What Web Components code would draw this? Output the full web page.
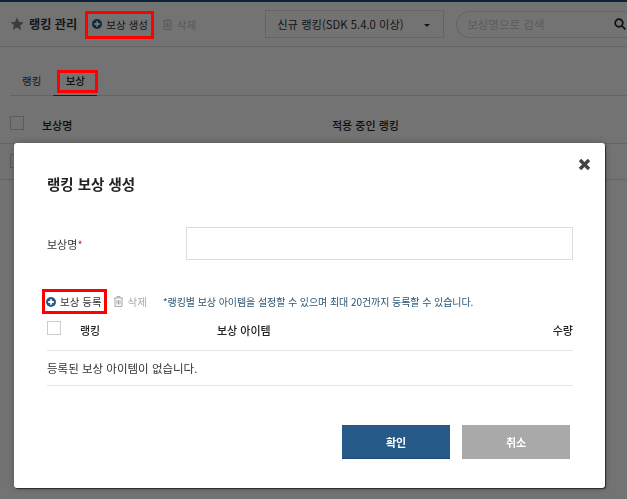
<!DOCTYPE html>
<html lang="ko">
<head>
<meta charset="utf-8">
<style>
html, body { margin: 0; height: 100%; }
body { font-family: "Noto Sans CJK KR", "Noto Sans", sans-serif; background: #fff; overflow: hidden; }
</style>
</head>
<body>
<rank-page></rank-page>
<reward-modal></reward-modal>

<script>
const PLUS = `<svg width="10" height="10" viewBox="0 0 10 10"><circle cx="5" cy="5" r="5" fill="#265a88"/><path d="M5 2.2v5.6M2.2 5h5.6" stroke="#fff" stroke-width="1.8"/></svg>`;
const TRASH = `<svg width="9" height="11" viewBox="0 0 9 11" fill="none" stroke="currentColor"><path d="M0 2h9M3 2V.5h3V2M1 2v8.5h7V2M3 4v4.5M4.5 4v4.5M6 4v4.5"/></svg>`;

class ActionLink extends HTMLElement {
  constructor() {
    super();
    const icon = this.getAttribute("icon") === "trash" ? TRASH : PLUS;
    this.attachShadow({ mode: "open" }).innerHTML = `
    <style>
    :host { display: inline-flex; align-items: center; gap: 4px; height: 22px; box-sizing: border-box;
      font-size: 10.5px; color: #333; white-space: nowrap; flex: none; }
    :host([icon=trash]) { color: var(--muted, #aaa); gap: 5px; }
    :host([marked]) { border: 3px solid #f00; height: 25px; padding: 0 2px 0 1px; }
    svg { display: block; flex: none; }
    </style>
    ${icon}<slot></slot>`;
  }
}
customElements.define("action-link", ActionLink);

class CheckBox extends HTMLElement {
  constructor() {
    super();
    this.attachShadow({ mode: "open" }).innerHTML = `
    <style>
    :host { display: block; width: 14px; height: 14px; border: 1px solid #ccc; box-sizing: border-box; background: #fff; flex: none; }
    </style>`;
  }
}
customElements.define("check-box", CheckBox);

class MarkBox extends HTMLElement {
  constructor() {
    super();
    this.attachShadow({ mode: "open" }).innerHTML = `
    <style>
    :host { position: absolute; display: block; border: 3px solid #f00; box-sizing: border-box; }
    </style>`;
  }
}
customElements.define("mark-box", MarkBox);

class RankPage extends HTMLElement {
  constructor() {
    super();
    this.attachShadow({ mode: "open" }).innerHTML = `
    <style>
    :host { display: block; border-top: 2px solid #1c4d7a; color: #333; --muted: #c8c8c8; }
    header { display: flex; align-items: center; height: 44px; border-bottom: 1px solid #ddd; padding-left: 10px; }
    h1 { font-size: 12.2px; font-weight: 700; margin: 0 15px 0 5px; white-space: nowrap; }
    .star { width: 14px; height: 14px; display: block; flex: none; }
    .del { margin-left: 15px; }
    .select { display: flex; align-items: center; justify-content: space-between; flex: none; width: 179px; height: 28px; box-sizing: border-box;
      margin-left: 69px; padding: 0 13px 0 11px; border: 1px solid #ddd; font-size: 11.3px; white-space: nowrap; }
    .caret { width: 0; height: 0; border: 3px solid transparent; border-top: 3px solid #333; border-bottom: 0; margin-top: 2px; }
    .search { display: flex; align-items: center; justify-content: space-between; flex: none; width: 172px; height: 27px; box-sizing: border-box; margin-left: 12px;
      padding: 0 0 0 10px; border: 1px solid #ddd; border-radius: 14px 0 0 14px; border-right: 0; font-size: 11.5px; color: #ccc; white-space: nowrap; }
    .search svg { margin-right: 2px; flex: none; }
    nav { display: flex; margin: 22px 0 0 10px; height: 26px; border-bottom: 1px solid #ddd; }
    nav span { font-size: 10.5px; line-height: 24px; padding: 0 12px; }
    nav span.tab { width: 44px; height: 27px; box-sizing: border-box; padding: 0; margin-bottom: -1px; border-bottom: 1px solid #1c4d7a; text-align: center; font-weight: 500; color: #222; }
    .row { display: flex; align-items: flex-start; padding-left: 10px; border-bottom: 1px solid #ddd; box-sizing: border-box; }
    .r1 { height: 48px; padding-top: 20px; }
    .r2 { height: 36px; padding-top: 10px; }
    .row strong { font-size: 11px; font-weight: 500; line-height: 16px; margin: 1px 0 0 18px; width: 272px; color: #222; }
    </style>
    <header>
      <svg class="star" viewBox="0 0 24 24"><path fill="#888" d="M12 1l3.4 7.3 7.9 1-5.8 5.5 1.5 7.9L12 18l-7 3.7 1.5-7.9L.7 9.3l7.9-1z"/></svg>
      <h1>랭킹 관리</h1>
      <action-link>보상 생성</action-link>
      <action-link class="del" icon="trash">삭제</action-link>
      <div class="select"><span>신규 랭킹(SDK 5.4.0 이상)</span><i class="caret"></i></div>
      <div class="search"><span>보상명으로 검색</span>
        <svg width="12" height="12" viewBox="0 0 12 12" fill="none" stroke="#222" stroke-width="1.7"><circle cx="5" cy="5" r="3.8"/><path d="M8 8l3.4 3.4"/></svg>
      </div>
    </header>
    <nav><span>랭킹</span><span class="tab">보상</span></nav>
    <div class="row r1"><check-box></check-box><strong>보상명</strong><strong>적용 중인 랭킹</strong></div>
    <div class="row r2"><check-box></check-box></div>`;
  }
}
customElements.define("rank-page", RankPage);

class RewardModal extends HTMLElement {
  constructor() {
    super();
    this.attachShadow({ mode: "open" }).innerHTML = `
    <style>
    :host { position: fixed; inset: 0; background: rgba(0,0,0,.55); display: block; }
    .box { position: absolute; left: 14px; top: 143px; width: 591px; height: 345px; box-sizing: border-box; background: #fff; border-radius: 3px;
      box-shadow: 1px 1px 1px rgba(0,0,0,.6), 0 0 8px rgba(0,0,0,.25); padding: 31px 32px 0 33px; color: #333; }
    .close { position: absolute; right: 14px; top: 15px; display: block; }
    h2 { margin: 0; font-size: 14.5px; font-weight: 700; line-height: 20px; color: #222; }
    .field { display: flex; align-items: center; margin-top: 33px; font-size: 11px; }
    .field label { width: 139px; }
    .field label i { color: #d2232a; font-style: normal; }
    .field div { flex: 1; height: 33px; box-sizing: border-box; border: 1px solid #ddd; }
    .tools { display: flex; align-items: center; margin: 29px 0 0 -5px; }
    .tools .del { margin-left: 7px; }
    .tools p { margin: 0 0 0 16px; font-size: 10px; letter-spacing: -.07px; color: #2d5673; white-space: nowrap; }
    .head { display: flex; align-items: flex-start; height: 36px; border-bottom: 1px solid #e5e5e5; font-size: 11px; font-weight: 500; line-height: 16px; color: #222; }
    .head check-box { margin-top: 7px; }
    .head span { margin-top: 8px; }
    .head span:nth-of-type(1) { margin-left: 19px; width: 137px; }
    .head span:nth-of-type(2) { flex: 1; }
    .empty { height: 34px; line-height: 34px; border-bottom: 1px solid #e5e5e5; font-size: 11.5px; }
    .btns { display: flex; justify-content: flex-end; gap: 12px; margin: 39px 3px 0 0; }
    .btns span { width: 108px; height: 34px; line-height: 34px; text-align: center; font-size: 11px; font-weight: 700; color: #fff; box-sizing: border-box; }
    .ok { background: #265a88; border-bottom: 1px solid #1c4d7a; }
    .no { background: #a9a9a9; color: #eee; }
    </style>
    <div class="box">
      <svg class="close" width="13" height="13" viewBox="0 0 13 13"><path d="M2 2l9 9M11 2l-9 9" stroke="#444" stroke-width="3.4"/></svg>
      <h2>랭킹 보상 생성</h2>
      <div class="field"><label>보상명<i>*</i></label><div></div></div>
      <div class="tools">
        <action-link marked>보상 등록</action-link>
        <action-link class="del" icon="trash">삭제</action-link>
        <p>*랭킹별 보상 아이템을 설정할 수 있으며 최대 20건까지 등록할 수 있습니다.</p>
      </div>
      <div class="head"><check-box></check-box><span>랭킹</span><span>보상 아이템</span><span>수량</span></div>
      <div class="empty">등록된 보상 아이템이 없습니다.</div>
      <div class="btns"><span class="ok">확인</span><span class="no">취소</span></div>
    </div>
    <mark-box style="left:85px;top:11px;width:69px;height:28px"></mark-box>
    <mark-box style="left:57px;top:70px;width:41px;height:23px"></mark-box>`;
  }
}
customElements.define("reward-modal", RewardModal);
</script>
</body>
</html>
